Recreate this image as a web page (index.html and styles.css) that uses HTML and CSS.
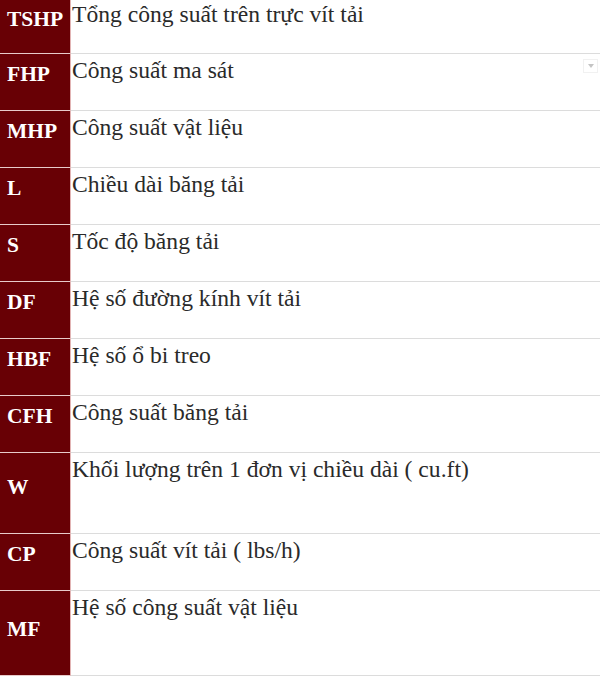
FILE: index.html
```html
<!DOCTYPE html>
<html lang="vi">
<head>
<meta charset="utf-8">
<title>Bảng ký hiệu</title>
<link rel="stylesheet" href="styles.css">
</head>
<body>
<div class="table">
  <div class="row first"><div class="code">TSHP</div><div class="desc">Tổng công suất trên trực vít tải</div></div>
  <div class="row"><div class="code">FHP</div><div class="desc">Công suất ma sát</div></div>
  <div class="row"><div class="code">MHP</div><div class="desc">Công suất vật liệu</div></div>
  <div class="row"><div class="code">L</div><div class="desc">Chiều dài băng tải</div></div>
  <div class="row"><div class="code">S</div><div class="desc">Tốc độ băng tải</div></div>
  <div class="row"><div class="code">DF</div><div class="desc">Hệ số đường kính vít tải</div></div>
  <div class="row"><div class="code">HBF</div><div class="desc">Hệ số ổ bi treo</div></div>
  <div class="row"><div class="code">CFH</div><div class="desc">Công suất băng tải</div></div>
  <div class="row tall"><div class="code">W</div><div class="desc">Khối lượng trên 1 đơn vị chiều dài ( cu.ft)</div></div>
  <div class="row"><div class="code">CP</div><div class="desc">Công suất vít tải ( lbs/h)</div></div>
  <div class="row taller"><div class="code">MF</div><div class="desc">Hệ số công suất vật liệu</div></div>
  <div class="dropdown"><span class="caret"></span></div>
</div>
</body>
</html>
```
FILE: styles.css
```css
* { box-sizing: border-box; }
html, body { margin: 0; padding: 0; background: #fff; }
body { font-family: "Liberation Serif", "Times New Roman", serif; }

.table {
  position: relative;
  width: 600px;
}

.row {
  display: grid;
  grid-template-columns: 71px 1fr;
  height: 57px;
}
.row.first { height: 54px; }
.row.tall { height: 81px; }
.row.taller { height: 85px; }

.code {
  background: #680005;
  color: #fff;
  font-weight: bold;
  font-size: 21.5px;
  line-height: 24px;
  display: flex;
  align-items: center;
  padding-left: 7px;
  padding-bottom: 16px;
  border-right: 1px solid #e2b4b4;
  border-bottom: 1px solid #e8caca;
}
.row.tall .code { padding-bottom: 12px; }
.row.taller .code { padding-bottom: 8px; }
.row.first .code { padding-bottom: 15px; }

.desc {
  color: #2a2a2a;
  font-size: 23.6px;
  line-height: 26px;
  padding: 3px 0 0 1px;
  border-bottom: 1px solid #dcdcdc;
}
.row.first .desc { padding-top: 1px; }

.dropdown {
  position: absolute;
  left: 583px;
  top: 59px;
  width: 15px;
  height: 14px;
  border: 1px solid #f1f1f1;
  display: flex;
  align-items: center;
  justify-content: center;
}
.caret {
  width: 0;
  height: 0;
  border-left: 3px solid transparent;
  border-right: 3px solid transparent;
  border-top: 4px solid #c4c4c4;
}
```
